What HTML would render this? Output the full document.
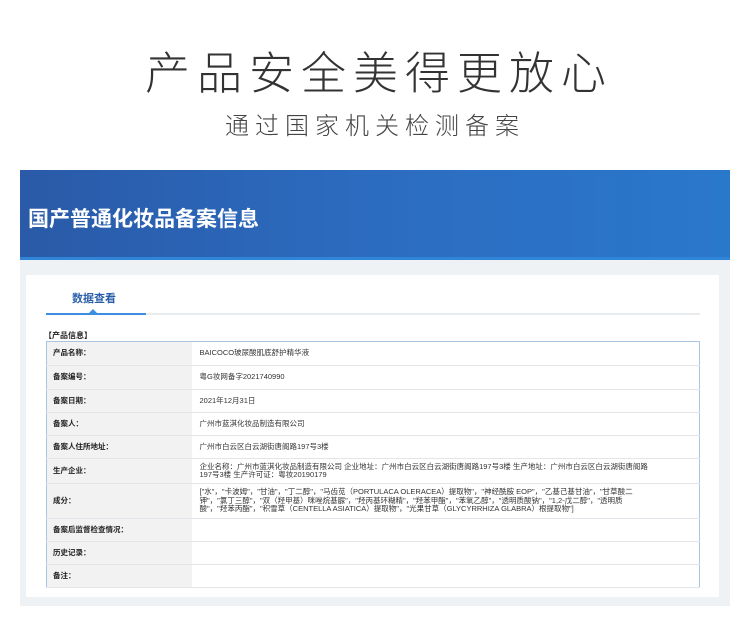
<!DOCTYPE html>
<html><head><meta charset="utf-8"><style>
*{margin:0;padding:0;box-sizing:border-box}
body{width:750px;height:627px;background:#fff;font-family:"Liberation Sans","Noto Sans CJK SC",sans-serif;position:relative;overflow:hidden}
.t1{position:absolute;left:145px;top:44px;font-size:45px;letter-spacing:7px;color:#333;font-weight:300;line-height:60px;white-space:nowrap}
.t2{position:absolute;left:225px;top:110px;font-size:24px;letter-spacing:6px;color:#444;font-weight:300;line-height:34px;white-space:nowrap}
.banner{position:absolute;left:20px;top:170px;width:710px;height:90px;background:linear-gradient(90deg,#2a5aa8 0%,#2c6cc0 50%,#2a78cc 100%);overflow:hidden}
.banner .b{position:absolute;left:0;bottom:0;width:710px;height:3px;background:#2f86d8}
.banner h1{position:absolute;left:8px;top:33px;font-size:21px;color:#fff;font-weight:bold;letter-spacing:0;font-family:"Noto Sans CJK SC",sans-serif}
.gray{position:absolute;left:20px;top:260px;width:710px;height:346px;background:#eef2f5}
.card{position:absolute;left:26px;top:275px;width:693px;height:322px;background:#fff}
.tab{position:absolute;left:72px;top:290px;font-size:11px;font-weight:bold;color:#2a5fa8}
.line{position:absolute;left:46px;top:313px;width:654px;height:2px;background:#e9ecef}
.line2{position:absolute;left:46px;top:313px;width:100px;height:2px;background:#3b8ee0}
.tri{position:absolute;left:89px;top:309px;width:0;height:0;border-left:4px solid transparent;border-right:4px solid transparent;border-bottom:4px solid #3b8ee0}
.sec{position:absolute;left:44px;top:330px;font-size:8px;font-weight:bold;color:#222}
table{position:absolute;left:46px;top:341px;width:654px;border-collapse:collapse;border:1px solid #aac4e4;font-size:7.5px;color:#333}
td{border-bottom:1px solid #e2e6ea;padding:0 6px;line-height:8.5px}
td.l{width:145px;background:#f2f2f2;font-weight:bold;color:#222;padding-left:6px;font-size:7.5px}
td.v{padding-left:8px}
</style></head><body>
<div class="t1">产品安全美得更放心</div>
<div class="t2">通过国家机关检测备案</div>
<div class="banner"><div class="b"></div><h1>国产普通化妆品备案信息</h1></div>
<div class="gray"></div>
<div class="card"></div>
<div class="tab">数据查看</div>
<div class="line"></div><div class="line2"></div><div class="tri"></div>
<div class="sec">【产品信息】</div>
<table>
<tr style="height:24px"><td class="l">产品名称：</td><td class="v">BAICOCO玻尿酸肌底舒护精华液</td></tr>
<tr style="height:24px"><td class="l">备案编号：</td><td class="v">粤G妆网备字2021740990</td></tr>
<tr style="height:23px"><td class="l">备案日期：</td><td class="v">2021年12月31日</td></tr>
<tr style="height:23px"><td class="l">备案人：</td><td class="v">广州市蓝淇化妆品制造有限公司</td></tr>
<tr style="height:23px"><td class="l">备案人住所地址：</td><td class="v">广州市白云区白云湖街唐阁路197号3楼</td></tr>
<tr style="height:25px"><td class="l">生产企业：</td><td class="v">企业名称：广州市蓝淇化妆品制造有限公司 企业地址：广州市白云区白云湖街唐阁路197号3楼 生产地址：广州市白云区白云湖街唐阁路<br>197号3楼 生产许可证：粤妆20190179</td></tr>
<tr style="height:35px"><td class="l">成分：</td><td class="v">["水"，"卡波姆"，"甘油"，"丁二醇"，"马齿苋（PORTULACA OLERACEA）提取物"，"神经酰胺 EOP"，"乙基己基甘油"，"甘草酸二<br>钾"，"氯丁三醇"，"双（羟甲基）咪唑烷基脲"，"羟丙基环糊精"，"羟苯甲酯"，"苯氧乙醇"，"透明质酸钠"，"1,2-戊二醇"，"透明质<br>酸"，"羟苯丙酯"，"积雪草（CENTELLA ASIATICA）提取物"，"光果甘草（GLYCYRRHIZA GLABRA）根提取物"]</td></tr>
<tr style="height:23px"><td class="l">备案后监督检查情况：</td><td class="v"></td></tr>
<tr style="height:23px"><td class="l">历史记录：</td><td class="v"></td></tr>
<tr style="height:23px"><td class="l">备注：</td><td class="v"></td></tr>
</table>
</body></html>
